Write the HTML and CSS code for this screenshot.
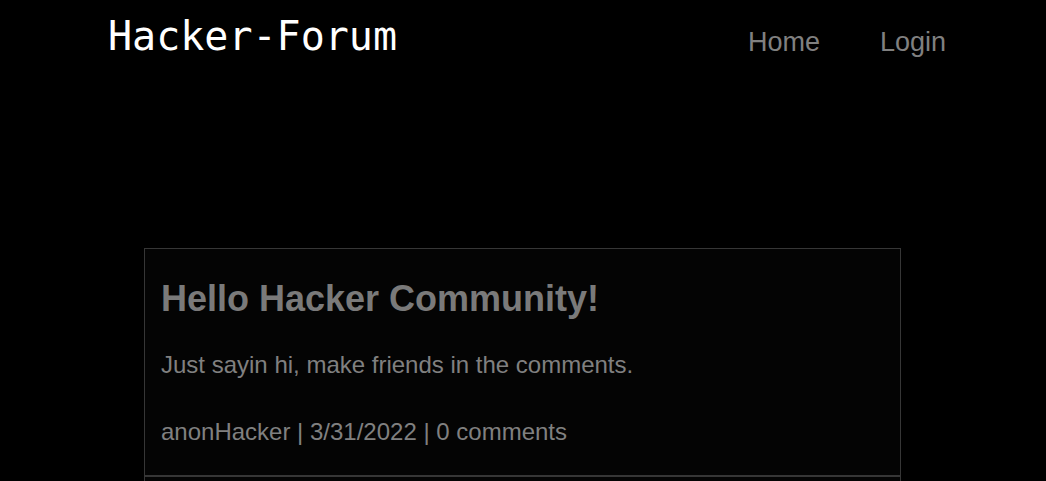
FILE: index.html
```html
<!DOCTYPE html>
<html lang="en">
<head>
<meta charset="utf-8">
<title>Hacker-Forum</title>
<link rel="stylesheet" href="styles.css">
</head>
<body>
<header class="site-header">
  <div class="logo">Hacker-Forum</div>
  <nav class="nav">
    <a class="nav-link" href="#">Home</a>
    <a class="nav-link" href="#">Login</a>
  </nav>
</header>
<main class="posts">
  <article class="post">
    <h1 class="post-title">Hello Hacker Community!</h1>
    <p class="post-body">Just sayin hi, make friends in the comments.</p>
    <p class="post-meta">anonHacker | 3/31/2022 | 0 comments</p>
  </article>
  <article class="post">
    <h1 class="post-title">Welcome to the forum</h1>
    <p class="post-body">Post your questions here.</p>
    <p class="post-meta">admin | 3/30/2022 | 0 comments</p>
  </article>
</main>
</body>
</html>
```
FILE: styles.css
```css
html, body {
  margin: 0;
  padding: 0;
  background: #000;
}

body {
  font-family: "Liberation Sans", Arial, sans-serif;
  color: #808080;
}

.site-header {
  display: flex;
  justify-content: space-between;
  align-items: flex-start;
  padding: 0 100px 0 108px;
  height: 60px;
}

.logo {
  margin-top: 12px;
  font-family: "DejaVu Sans Mono", monospace;
  font-size: 40px;
  line-height: 48px;
  color: #fff;
}

.nav {
  display: flex;
  gap: 60px;
  margin-top: 27px;
}

.nav-link {
  font-size: 27px;
  color: #808080;
  text-decoration: none;
}

.posts {
  padding-top: 188px;
  margin-left: 144px;
  width: 757px;
}

.post {
  border: 1px solid #363636;
  background: #040404;
  padding: 0 16px 29px;
}

.post-title {
  margin: 29px 0 0;
  font-size: 36px;
  font-weight: bold;
  color: #7a7a7a;
}

.post-body {
  margin: 31px 0 0;
  font-size: 24px;
}

.post-meta {
  margin: 39px 0 0;
  font-size: 24px;
}
```
